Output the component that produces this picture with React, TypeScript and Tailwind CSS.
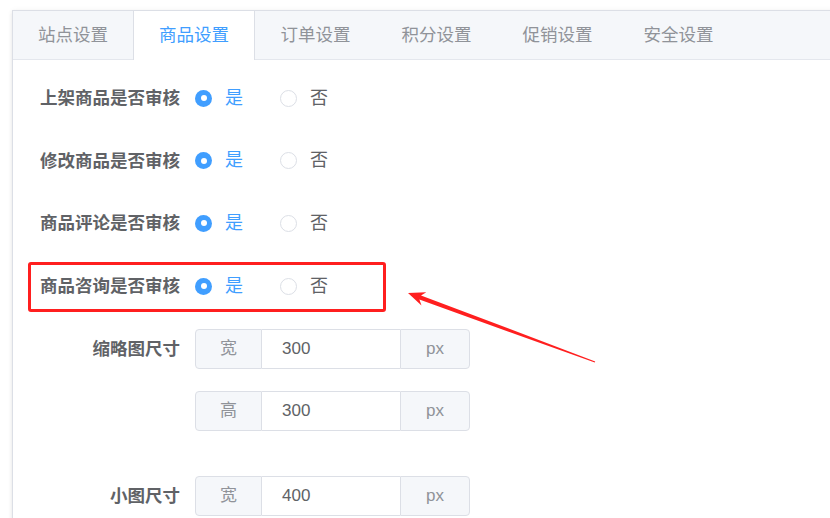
import React from 'react';

const tabs = ['站点设置', '商品设置', '订单设置', '积分设置', '促销设置', '安全设置'];

const auditRows = ['上架商品是否审核', '修改商品是否审核', '商品评论是否审核', '商品咨询是否审核'];

function Radio({ checked, label }: { checked: boolean; label: string }) {
    return (
        <label className="flex items-center">
            {checked ? (
                <span className="w-[17px] h-[17px] rounded-full bg-[#409eff] flex items-center justify-center">
                    <span className="w-[6px] h-[6px] rounded-full bg-white" />
                </span>
            ) : (
                <span className="w-[17px] h-[17px] rounded-full border border-[#dcdfe6] bg-white" />
            )}
            <span className={`ml-[13px] text-[18px] ${checked ? 'text-[#409eff]' : 'text-[#606266]'}`}>{label}</span>
        </label>
    );
}

function SizeInput({ prefix, value }: { prefix: string; value: string }) {
    return (
        <div className="flex h-[40px] w-[275px] text-[17px]">
            <div className="w-[67px] flex items-center justify-center bg-[#f5f7fa] border border-[#dcdfe6] rounded-l-[4px] text-[#909399]">
                {prefix}
            </div>
            <div className="flex-1 flex items-center pl-[20px] border-y border-[#dcdfe6] bg-white text-[#606266]">
                {value}
            </div>
            <div className="w-[70px] flex items-center justify-center bg-[#f5f7fa] border border-[#dcdfe6] rounded-r-[4px] text-[#909399]">
                px
            </div>
        </div>
    );
}

export default function App() {
    return (
        <div
            className="relative w-[830px] h-[518px] overflow-hidden bg-white pt-[10px] pl-[12px]"
            style={{ fontFamily: '"Liberation Sans", "Noto Sans CJK SC", sans-serif' }}
        >
            <div className="w-[840px] h-[540px] border border-[#dcdfe6] bg-white shadow-[0_2px_4px_rgba(0,0,0,0.08),0_0_6px_rgba(0,0,0,0.04)]">
                {/* Tabs header */}
                <div className="flex h-[49px] bg-[#f5f7fa] border-b border-[#e4e7ed]">
                    {tabs.map((tab, i) =>
                        i === 1 ? (
                            <div
                                key={tab}
                                className="w-[122px] h-[49px] flex items-center justify-center bg-white border-x border-[#dcdfe6] text-[17.5px] text-[#409eff]"
                            >
                                {tab}
                            </div>
                        ) : (
                            <div
                                key={tab}
                                className={`${i === 0 ? 'w-[120px]' : 'w-[121px]'} h-[49px] flex items-center justify-center text-[17.5px] text-[#909399]`}
                            >
                                {tab}
                            </div>
                        )
                    )}
                </div>

                {/* Form */}
                <div className="pt-[18px] text-[17.5px]">
                    {auditRows.map((row, i) => (
                        <div key={row} className={`flex items-center h-[40px] ${i === 0 ? '' : 'mt-[22.7px]'}`}>
                            <div className="w-[167px] text-right font-bold text-[#606266]">{row}</div>
                            <div className="ml-[15px] flex items-center gap-[37px]">
                                <Radio checked label="是" />
                                <Radio checked={false} label="否" />
                            </div>
                        </div>
                    ))}

                    <div className="flex items-center h-[40px] mt-[23px]">
                        <div className="w-[167px] text-right font-bold text-[#606266]">缩略图尺寸</div>
                        <div className="ml-[15px]">
                            <SizeInput prefix="宽" value="300" />
                        </div>
                    </div>
                    <div className="flex items-center h-[40px] mt-[22px]">
                        <div className="w-[167px]" />
                        <div className="ml-[15px]">
                            <SizeInput prefix="高" value="300" />
                        </div>
                    </div>
                    <div className="flex items-center h-[40px] mt-[45px]">
                        <div className="w-[167px] text-right font-bold text-[#606266]">小图尺寸</div>
                        <div className="ml-[15px]">
                            <SizeInput prefix="宽" value="400" />
                        </div>
                    </div>
                </div>
            </div>

            {/* Annotation: red highlight box */}
            <div className="absolute left-[28px] top-[262px] w-[358px] h-[50px] border-[3px] border-[#ff1f1f] rounded-[3px] pointer-events-none" />

            {/* Annotation: arrow */}
            <svg className="absolute left-0 top-0 pointer-events-none" width="830" height="518" viewBox="0 0 830 518">
                <polygon
                    fill="#ff1f1f"
                    points="408,293 426.3,292.3 421,295.4 595.2,361.4 594.8,362.6 419.4,299.6 421.5,305.5"
                />
            </svg>
        </div>
    );
}
